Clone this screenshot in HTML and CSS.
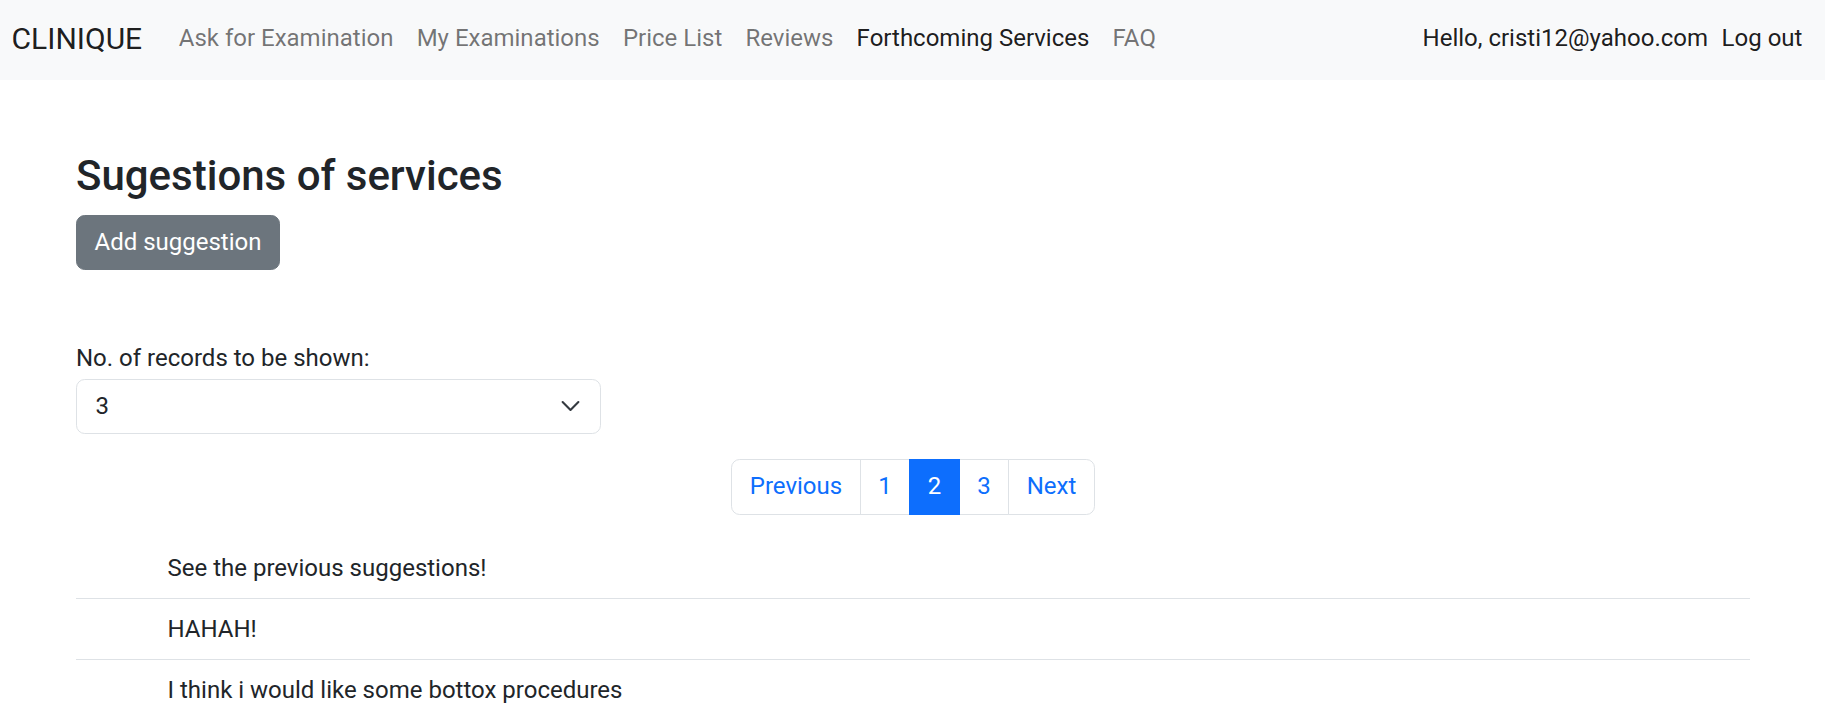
FILE: index.html
```html
<!DOCTYPE html>
<html lang="en">
<head>
<meta charset="utf-8">
<title>CLINIQUE - Forthcoming Services</title>
<link rel="stylesheet" href="styles.css">
</head>
<body>
<nav class="navbar">
  <div class="nav-left">
    <a class="brand" href="#">CLINIQUE</a>
    <ul class="nav-links">
      <li><a class="nav-link" href="#">Ask for Examination</a></li>
      <li><a class="nav-link" href="#">My Examinations</a></li>
      <li><a class="nav-link" href="#">Price List</a></li>
      <li><a class="nav-link" href="#">Reviews</a></li>
      <li><a class="nav-link active" href="#">Forthcoming Services</a></li>
      <li><a class="nav-link" href="#">FAQ</a></li>
    </ul>
  </div>
  <div class="nav-right">
    <span class="nav-text">Hello, cristi12@yahoo.com</span>
    <a class="nav-link dark" href="#">Log out</a>
  </div>
</nav>

<main class="content">
  <h3 class="title">Sugestions of services</h3>
  <button class="btn" type="button">Add suggestion</button>

  <div class="records">
    <label class="records-label" for="records">No. of records to be shown:</label>
    <div class="select-wrap">
      <select id="records" class="form-select">
        <option>3</option>
      </select>
      <svg class="chevron" viewBox="0 0 16 16" aria-hidden="true"><path d="m2 5 6 6 6-6" fill="none" stroke="#343a40" stroke-width="1.6" stroke-linecap="round" stroke-linejoin="round"/></svg>
    </div>
  </div>

  <ul class="pagination">
    <li><a class="page-link first" href="#">Previous</a></li>
    <li><a class="page-link" href="#">1</a></li>
    <li><a class="page-link active" href="#">2</a></li>
    <li><a class="page-link" href="#">3</a></li>
    <li><a class="page-link last" href="#">Next</a></li>
  </ul>

  <ul class="suggestions">
    <li class="suggestion">See the previous suggestions!</li>
    <li class="suggestion">HAHAH!</li>
    <li class="suggestion">I think i would like some bottox procedures</li>
  </ul>
</main>
</body>
</html>
```

FILE: styles.css
```css
* { box-sizing: border-box; }

html, body {
  margin: 0;
  padding: 0;
}

body {
  font-family: Roboto, "Liberation Sans", Arial, sans-serif;
  font-size: 24px;
  line-height: 34.9px;
  color: #212529;
  background: #ffffff;
  overflow: hidden;
}

a { text-decoration: none; }

ul { list-style: none; margin: 0; padding: 0; }

/* Navbar */
.navbar {
  height: 80px;
  background: #f8f9fa;
  display: flex;
  align-items: center;
  justify-content: space-between;
  padding: 0 11px 3px 11.6px;
}

.nav-left {
  display: flex;
  align-items: center;
}

.brand {
  font-size: 30px;
  line-height: 43.6px;
  color: rgba(0, 0, 0, 0.9);
  margin-right: 25px;
}

.nav-links {
  display: flex;
  align-items: center;
}

.nav-link {
  display: block;
  padding: 0 11.6px;
  color: rgba(0, 0, 0, 0.55);
}

.nav-link.active,
.nav-link.dark {
  color: rgba(0, 0, 0, 0.9);
}

.nav-right {
  display: flex;
  align-items: center;
}

.nav-text {
  color: rgba(0, 0, 0, 0.9);
  padding-right: 2px;
}

/* Main */
.content {
  padding: 72px 75px 0 76px;
}

.title {
  margin: 0 0 14px 0;
  font-size: 42px;
  font-weight: 500;
  line-height: 48.9px;
  color: #212529;
}

.btn {
  display: inline-block;
  font-family: inherit;
  font-size: 24px;
  line-height: 34.9px;
  color: #ffffff;
  background: #6c757d;
  border: 1px solid #6c757d;
  border-radius: 8.7px;
  padding: 9.2px 17.5px;
  cursor: pointer;
}

.records {
  margin-top: 71px;
  width: 525px;
}

.records-label {
  display: block;
  margin-bottom: 2.5px;
}

.select-wrap {
  position: relative;
}

.form-select {
  display: block;
  width: 100%;
  height: 55px;
  appearance: none;
  -webkit-appearance: none;
  font-family: inherit;
  font-size: 24px;
  line-height: 34.9px;
  color: #212529;
  background: #ffffff;
  border: 1px solid #dee2e6;
  border-radius: 8.7px;
  padding: 8.7px 52px 8.7px 18.5px;
}

.chevron {
  position: absolute;
  right: 20px;
  top: 50%;
  width: 21px;
  height: 21px;
  transform: translateY(-50%);
  pointer-events: none;
}

/* Pagination */
.pagination {
  display: flex;
  justify-content: center;
  margin: 25px 0 24px 0;
}

.page-link {
  display: block;
  padding: 9.5px 17.5px;
  line-height: 34.9px;
  color: #0d6efd;
  background: #ffffff;
  border: 1px solid #dee2e6;
  margin-left: -1px;
}

.page-link.first {
  margin-left: 0;
  border-radius: 8.7px 0 0 8.7px;
}

.page-link.last {
  border-radius: 0 8.7px 8.7px 0;
}

.page-link.active {
  color: #ffffff;
  background: #0d6efd;
  border-color: #0d6efd;
  position: relative;
}

/* Suggestions */
.suggestion {
  padding: 12.5px 12px 12.5px 91.5px;
  line-height: 34.9px;
  border-bottom: 1px solid #dee2e6;
}
```
